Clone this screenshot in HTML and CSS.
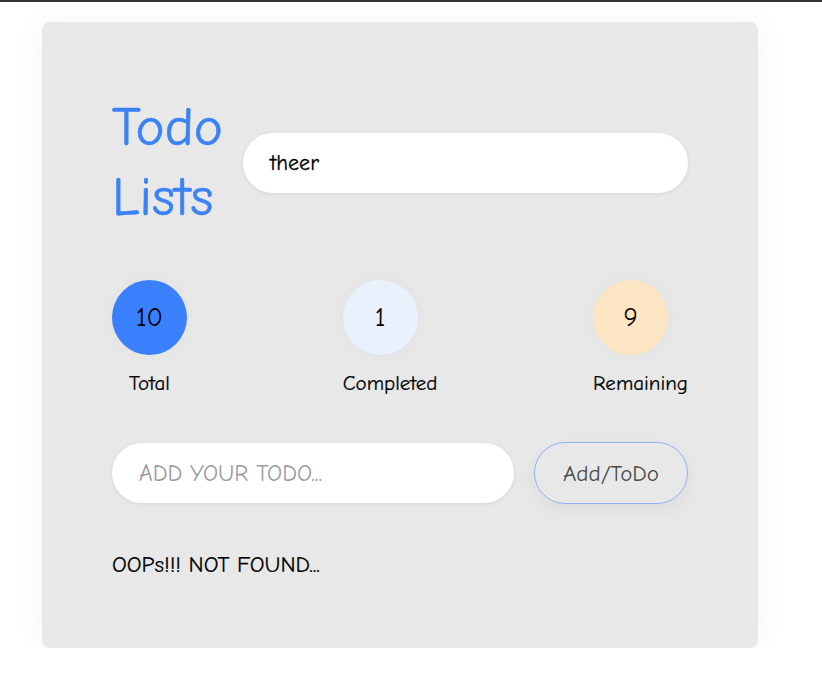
FILE: index.html
```html
<!DOCTYPE html>
<html>
<head>
<meta charset="utf-8">
<link rel="stylesheet" href="styles.css">
</head>
<body>
<div class="topbar"></div>
<div class="card">
  <div class="header">
    <h1 class="title">Todo Lists</h1>
    <div class="search">theer</div>
  </div>
  <div class="stats">
    <div class="stat">
      <div class="circle total">10</div>
      <div class="label">Total</div>
    </div>
    <div class="stat">
      <div class="circle done">1</div>
      <div class="label">Completed</div>
    </div>
    <div class="stat">
      <div class="circle remain">9</div>
      <div class="label">Remaining</div>
    </div>
  </div>
  <div class="add-row">
    <div class="add-input">ADD YOUR TODO...</div>
    <div class="add-btn">Add/ToDo</div>
  </div>
  <p class="empty">OOPs!!! NOT FOUND...</p>
</div>
</body>
</html>
```
FILE: styles.css
```css
* { box-sizing: border-box; }
body {
  margin: 0;
  background: #ffffff;
  font-family: "Comic Sans MS", "Comic Neue", "Open Sans", sans-serif;
  color: #000;
}
.topbar {
  height: 2px;
  background: #35363d;
}
.card {
  margin: 20px 0 0 42px;
  width: 716px;
  height: 626px;
  padding: 70px;
  background: #e8e8e8;
  border-radius: 8px;
  box-shadow: 0 0 30px rgba(0,0,0,0.05);
}
.header {
  display: flex;
  align-items: center;
  gap: 21px;
  height: 140px;
}
.title {
  margin: 0;
  font-size: 55px;
  font-weight: normal;
  line-height: 70px;
  color: #3b82f6;
  width: 110px;
  flex: none;
  -webkit-text-stroke: 0.6px #3b82f6;
}
.search {
  flex: 1;
  height: 60px;
  margin-top: 2px;
  border-radius: 30px;
  background: #fff;
  padding: 0 27px;
  display: flex;
  align-items: center;
  font-size: 22px;
  -webkit-text-stroke: 0.3px #000;
  box-shadow: 0 1px 4px rgba(0,0,0,0.08);
}
.stats {
  margin-top: 48px;
  display: flex;
  justify-content: space-between;
}
.stat {
  text-align: center;
}
.circle {
  width: 75px;
  height: 75px;
  border-radius: 50%;
  display: flex;
  align-items: center;
  justify-content: center;
  font-size: 27px;
  box-shadow: 0 0 20px rgba(0,0,0,0.03);
}
.total { background: #3a80fd; }
.done { background: #e9f1fd; }
.remain { background: #fbe5c2; }
.label {
  margin-top: 14px;
  font-size: 21px;
  line-height: 28px;
  -webkit-text-stroke: 0.2px #000;
}
.add-row {
  margin-top: 45px;
  display: flex;
  align-items: center;
  gap: 20px;
}
.add-input {
  flex: 1;
  height: 60px;
  border-radius: 30px;
  background: #fff;
  padding: 0 27px;
  display: flex;
  align-items: center;
  font-size: 23.5px;
  color: #9a9aa2;
  box-shadow: 0 1px 4px rgba(0,0,0,0.08);
}
.add-btn {
  width: 154px;
  height: 62px;
  border-radius: 31px;
  border: 1px solid #8fb1f2;
  display: flex;
  align-items: center;
  justify-content: center;
  font-size: 23px;
  color: #4a4a4a;
  box-shadow: 0 6px 20px rgba(0,0,0,0.05);
}
.empty {
  margin: 48px 0 0;
  font-size: 23px;
  line-height: 26px;
  -webkit-text-stroke: 0.2px #000;
}
```
